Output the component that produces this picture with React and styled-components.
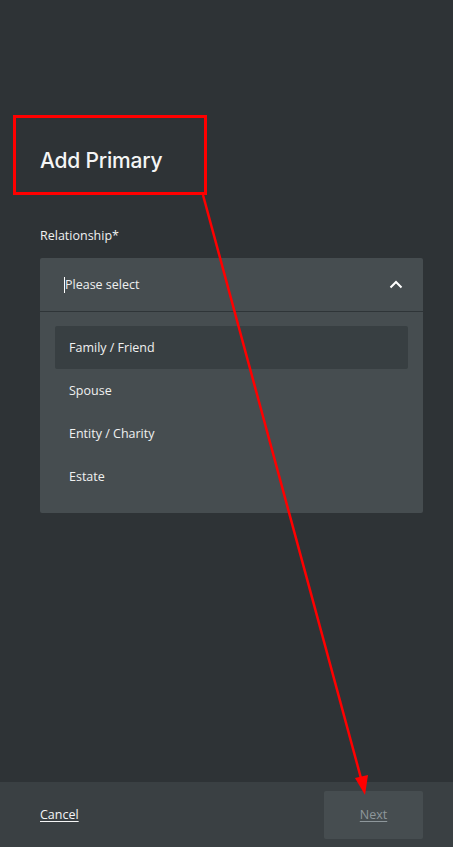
import React from "react";
import styled, { createGlobalStyle } from "styled-components";

const Global = createGlobalStyle`
  html, body { margin: 0; padding: 0; background: #2e3336; }
  body { font-family: "Open Sans", "Noto Sans", sans-serif; }
  * { box-sizing: border-box; }
`;

const Page = styled.div`
  position: relative;
  width: 453px;
  height: 847px;
  display: flex;
  flex-direction: column;
  background: #2e3336;
  color: #ffffff;
  overflow: hidden;
`;

const Body = styled.main`
  flex: 1;
  display: flex;
  flex-direction: column;
  padding: 146px 30px 0 40px;
`;

const Title = styled.h1`
  margin: 0;
  font-family: Inter, "Noto Sans", sans-serif;
  font-weight: 500;
  font-size: 21px;
  line-height: 30px;
  letter-spacing: -0.2px;
  color: #f4f5f5;
`;

const Label = styled.label`
  margin-top: 51px;
  font-size: 12.5px;
  line-height: 18px;
  color: #f0f1f1;
`;

const Select = styled.div`
  margin-top: 13px;
  display: flex;
  flex-direction: column;
  background: #464d50;
  border-radius: 2px;
`;

const Trigger = styled.div`
  height: 54px;
  display: flex;
  align-items: center;
  justify-content: space-between;
  padding: 0 20px 0 24px;
  border-bottom: 1px solid #2f3538;
`;

const Placeholder = styled.span`
  font-size: 12.5px;
  color: #eef0f0;
  border-left: 1px solid #ffffff;
  line-height: 16px;
`;

const List = styled.ul`
  list-style: none;
  margin: 0;
  padding: 14px 15px 15px 15px;
  display: flex;
  flex-direction: column;
`;

const Item = styled.li`
  height: 43px;
  display: flex;
  align-items: center;
  padding: 0 14px;
  font-size: 12.5px;
  color: #f0f1f1;
  border-radius: 2px;
  background: ${(p) => (p.$active ? "#383f42" : "transparent")};
`;

const Footer = styled.footer`
  height: 65px;
  display: flex;
  align-items: center;
  justify-content: space-between;
  padding: 0 30px 0 40px;
  background: #3a4043;
`;

const LinkText = styled.a`
  font-size: 12.5px;
  color: ${(p) => (p.$muted ? "#8e979b" : "#f4f5f5")};
  text-decoration: underline;
  text-underline-offset: 2px;
  cursor: pointer;
`;

const NextButton = styled.div`
  width: 99px;
  height: 48px;
  display: flex;
  align-items: center;
  justify-content: center;
  background: #464d50;
  border-radius: 2px;
`;

const Overlay = styled.svg`
  position: absolute;
  left: 0;
  top: 0;
  width: 453px;
  height: 847px;
  pointer-events: none;
`;

export default function App() {
  const items = ["Family / Friend", "Spouse", "Entity / Charity", "Estate"];
  return (
    <Page>
      <Global />
      <Body>
        <Title>Add Primary</Title>
        <Label>Relationship*</Label>
        <Select>
          <Trigger>
            <Placeholder>Please select</Placeholder>
            <svg width="14" height="9" viewBox="0 0 14 9">
              <path d="M1.5 7.5 L7 2 L12.5 7.5" fill="none" stroke="#ffffff" strokeWidth="2" />
            </svg>
          </Trigger>
          <List>
            {items.map((t, i) => (
              <Item key={t} $active={i === 0}>{t}</Item>
            ))}
          </List>
        </Select>
      </Body>
      <Footer>
        <LinkText>Cancel</LinkText>
        <NextButton>
          <LinkText $muted>Next</LinkText>
        </NextButton>
      </Footer>
      <Overlay viewBox="0 0 453 847">
        <rect x="14.5" y="116.5" width="191" height="77" fill="none" stroke="#ff0000" strokeWidth="3" />
        <line x1="203" y1="195" x2="362" y2="782" stroke="#ff0000" strokeWidth="2.5" />
        <polygon points="365,795 355,778 368,775" fill="#ff0000" />
      </Overlay>
    </Page>
  );
}
